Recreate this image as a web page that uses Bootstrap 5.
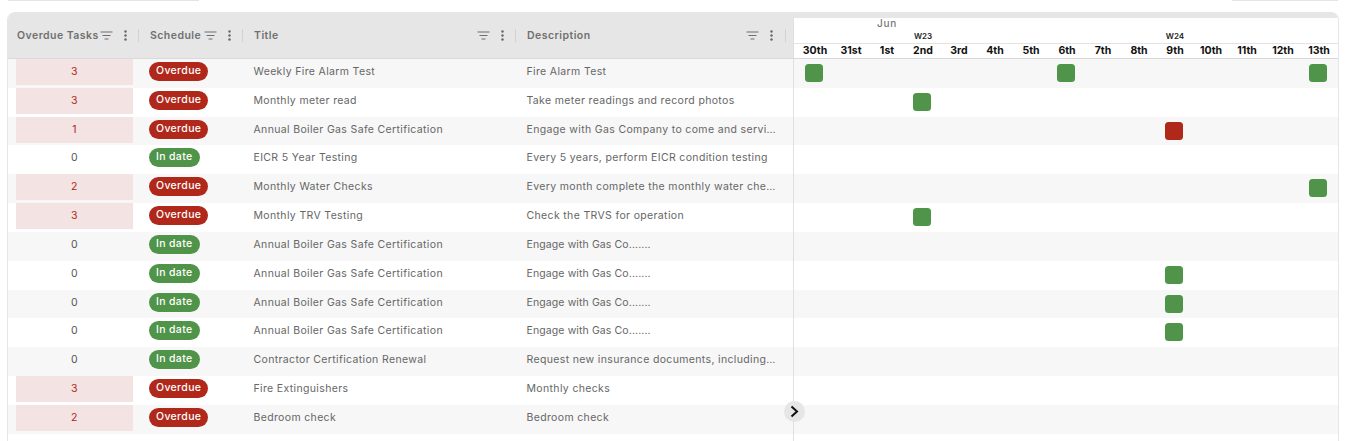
<!DOCTYPE html>
<html lang="en">
<head>
<meta charset="utf-8">
<title>Schedule</title>
<link href="https://cdn.jsdelivr.net/npm/bootstrap@5.3.0/dist/css/bootstrap.min.css" rel="stylesheet">
<style>
html,body{height:441px;overflow:hidden;background:#fff}
body{font-family:Inter,"Liberation Sans",sans-serif;font-size:10.5px;color:#666;letter-spacing:.35px}
.stubs{height:1px;padding:0 10px 0 8px}
.stubs span{display:block;height:1px;background:#e4e4e4}
.stub-a{width:191px}.stub-b{width:106px}
.sheet{margin:11px 9px 0 7px;border:1px solid #e6e6e6;border-width:0 1px;border-radius:8px 8px 0 0;height:429px;overflow:hidden;position:relative}
.head{height:47px;background:#e6e6e6;border-bottom:1px solid #d9d9d9}
.hcell{font-size:10.5px;font-weight:600;color:#707070;letter-spacing:.46px;position:relative}
.c1{width:131px;flex:none}.c2{width:104px;flex:none}.c3{width:273px;flex:none}.c4{width:277px;flex:none}
.hcell.c1{padding:1px 12px 0 9px}.hcell.c2,.hcell.c3{padding:1px 12px 0 11px}.hcell.c4{padding:1px 20px 0 11px}
.hcell::after{content:"";position:absolute;right:0;top:17px;width:1px;height:13px;background:#d2d2d2}
.hcell.c4::after{right:7px}
.tools{display:flex;align-items:center;gap:11px;margin-left:auto}
.tools svg{display:block}
.gantt-head{flex:1 0 544px;background:#fff;margin-top:6px;height:40px;border-left:1px solid #e0e0e0;color:#111;letter-spacing:0}
.month{height:11px;padding-left:83px;line-height:11px;font-size:10px;color:#777;font-weight:500;letter-spacing:.8px}
.weeks{display:grid;grid-template-columns:repeat(15,36px);padding-left:3px;height:15px;border-bottom:1px solid #e3e3e3;font-size:8px;font-weight:600;color:#222;text-align:center;line-height:14px}
.days{display:grid;grid-template-columns:repeat(15,36px);padding-left:3px;font-size:10.5px;font-weight:700;color:#111;text-align:center;line-height:14px}
.trow{height:28.84px;line-height:25px}
.trow:nth-child(odd){background:#f7f7f7}
.cnum{padding:0 0 0 8px}
.cnum div{width:117px;height:26px;text-align:center;color:#555;line-height:25px}
.cnum .late{background:#f3e3e2;color:#b0281a}
.cpill{padding:0 0 0 10px}
.pillx{display:inline-block;height:19px;line-height:18.5px;border-radius:10px;padding:0 7px;color:#fff;font-size:10.5px;font-weight:500;vertical-align:1px}
.pill-r{background:#b0281a}.pill-g{background:#4f9448}
.ctext{padding-left:10.5px;white-space:nowrap}
.dotsx{letter-spacing:.11px}
.glane{flex:1 0 544px;border-left:1px solid #e0e0e0;display:grid;grid-template-columns:repeat(15,36px);padding-left:3px}
.bar{width:18px;height:18px;border-radius:3.5px;margin:5px 0 0 8px}
.bar-g{background:#4f9448}.bar-r{background:#b0281a}
.expander{position:absolute;left:776px;top:389px;width:21px;height:21px;border-radius:50%;background:#e6e6e6}
.axis{position:absolute;left:785px;top:376px;bottom:0;width:1px;background:#e0e0e0}
.expander svg{display:block;margin:4px 0 0 5px}
</style>
</head>
<body>
<div class="stubs d-flex justify-content-between"><span class="stub-a"></span><span class="stub-b"></span></div>
<div class="sheet">
  <div class="head d-flex align-items-stretch">
    <div class="hcell c1 d-flex align-items-center"><span>Overdue Tasks</span><span class="tools"><svg width="13" height="10" viewBox="0 0 13 10"><path d="M.5 1h12M2.5 4.5h8M4.5 8h4" stroke="#6f6f6f" stroke-width="1.2"/></svg><svg width="3" height="11" viewBox="0 0 3 11"><circle cx="1.5" cy="1.5" r="1.2" fill="#666"/><circle cx="1.5" cy="5.5" r="1.2" fill="#666"/><circle cx="1.5" cy="9.5" r="1.2" fill="#666"/></svg></span></div>
    <div class="hcell c2 d-flex align-items-center"><span>Schedule</span><span class="tools"><svg width="13" height="10" viewBox="0 0 13 10"><path d="M.5 1h12M2.5 4.5h8M4.5 8h4" stroke="#6f6f6f" stroke-width="1.2"/></svg><svg width="3" height="11" viewBox="0 0 3 11"><circle cx="1.5" cy="1.5" r="1.2" fill="#666"/><circle cx="1.5" cy="5.5" r="1.2" fill="#666"/><circle cx="1.5" cy="9.5" r="1.2" fill="#666"/></svg></span></div>
    <div class="hcell c3 d-flex align-items-center"><span>Title</span><span class="tools"><svg width="13" height="10" viewBox="0 0 13 10"><path d="M.5 1h12M2.5 4.5h8M4.5 8h4" stroke="#6f6f6f" stroke-width="1.2"/></svg><svg width="3" height="11" viewBox="0 0 3 11"><circle cx="1.5" cy="1.5" r="1.2" fill="#666"/><circle cx="1.5" cy="5.5" r="1.2" fill="#666"/><circle cx="1.5" cy="9.5" r="1.2" fill="#666"/></svg></span></div>
    <div class="hcell c4 d-flex align-items-center"><span>Description</span><span class="tools"><svg width="13" height="10" viewBox="0 0 13 10"><path d="M.5 1h12M2.5 4.5h8M4.5 8h4" stroke="#6f6f6f" stroke-width="1.2"/></svg><svg width="3" height="11" viewBox="0 0 3 11"><circle cx="1.5" cy="1.5" r="1.2" fill="#666"/><circle cx="1.5" cy="5.5" r="1.2" fill="#666"/><circle cx="1.5" cy="9.5" r="1.2" fill="#666"/></svg></span></div>
    <div class="gantt-head">
      <div class="month">Jun</div>
      <div class="weeks"><span></span><span></span><span></span><span>W23</span><span></span><span></span><span></span><span></span><span></span><span></span><span>W24</span><span></span><span></span><span></span><span></span></div>
      <div class="days"><span>30th</span><span>31st</span><span>1st</span><span>2nd</span><span>3rd</span><span>4th</span><span>5th</span><span>6th</span><span>7th</span><span>8th</span><span>9th</span><span>10th</span><span>11th</span><span>12th</span><span>13th</span></div>
    </div>
  </div>
  <div class="tbody-x">
    <div class="trow d-flex"><div class="c1 cnum"><div class="late">3</div></div><div class="c2 cpill"><span class="pillx pill-r">Overdue</span></div><div class="c3 ctext">Weekly Fire Alarm Test</div><div class="c4 ctext">Fire Alarm Test</div><div class="glane"><div class="bar bar-g"></div><i></i><i></i><i></i><i></i><i></i><i></i><div class="bar bar-g"></div><i></i><i></i><i></i><i></i><i></i><i></i><div class="bar bar-g"></div></div></div>
    <div class="trow d-flex"><div class="c1 cnum"><div class="late">3</div></div><div class="c2 cpill"><span class="pillx pill-r">Overdue</span></div><div class="c3 ctext">Monthly meter read</div><div class="c4 ctext">Take meter readings and record photos</div><div class="glane"><i></i><i></i><i></i><div class="bar bar-g"></div></div></div>
    <div class="trow d-flex"><div class="c1 cnum"><div class="late">1</div></div><div class="c2 cpill"><span class="pillx pill-r">Overdue</span></div><div class="c3 ctext">Annual Boiler Gas Safe Certification</div><div class="c4 ctext">Engage with Gas Company to come and servi…</div><div class="glane"><i></i><i></i><i></i><i></i><i></i><i></i><i></i><i></i><i></i><i></i><div class="bar bar-r"></div></div></div>
    <div class="trow d-flex"><div class="c1 cnum"><div>0</div></div><div class="c2 cpill"><span class="pillx pill-g">In date</span></div><div class="c3 ctext">EICR 5 Year Testing</div><div class="c4 ctext">Every 5 years, perform EICR condition testing</div><div class="glane"></div></div>
    <div class="trow d-flex"><div class="c1 cnum"><div class="late">2</div></div><div class="c2 cpill"><span class="pillx pill-r">Overdue</span></div><div class="c3 ctext">Monthly Water Checks</div><div class="c4 ctext">Every month complete the monthly water che…</div><div class="glane"><i></i><i></i><i></i><i></i><i></i><i></i><i></i><i></i><i></i><i></i><i></i><i></i><i></i><i></i><div class="bar bar-g"></div></div></div>
    <div class="trow d-flex"><div class="c1 cnum"><div class="late">3</div></div><div class="c2 cpill"><span class="pillx pill-r">Overdue</span></div><div class="c3 ctext">Monthly TRV Testing</div><div class="c4 ctext">Check the TRVS for operation</div><div class="glane"><i></i><i></i><i></i><div class="bar bar-g"></div></div></div>
    <div class="trow d-flex"><div class="c1 cnum"><div>0</div></div><div class="c2 cpill"><span class="pillx pill-g">In date</span></div><div class="c3 ctext">Annual Boiler Gas Safe Certification</div><div class="c4 ctext dotsx">Engage with Gas Co.......</div><div class="glane"></div></div>
    <div class="trow d-flex"><div class="c1 cnum"><div>0</div></div><div class="c2 cpill"><span class="pillx pill-g">In date</span></div><div class="c3 ctext">Annual Boiler Gas Safe Certification</div><div class="c4 ctext dotsx">Engage with Gas Co.......</div><div class="glane"><i></i><i></i><i></i><i></i><i></i><i></i><i></i><i></i><i></i><i></i><div class="bar bar-g"></div></div></div>
    <div class="trow d-flex"><div class="c1 cnum"><div>0</div></div><div class="c2 cpill"><span class="pillx pill-g">In date</span></div><div class="c3 ctext">Annual Boiler Gas Safe Certification</div><div class="c4 ctext dotsx">Engage with Gas Co.......</div><div class="glane"><i></i><i></i><i></i><i></i><i></i><i></i><i></i><i></i><i></i><i></i><div class="bar bar-g"></div></div></div>
    <div class="trow d-flex"><div class="c1 cnum"><div>0</div></div><div class="c2 cpill"><span class="pillx pill-g">In date</span></div><div class="c3 ctext">Annual Boiler Gas Safe Certification</div><div class="c4 ctext dotsx">Engage with Gas Co.......</div><div class="glane"><i></i><i></i><i></i><i></i><i></i><i></i><i></i><i></i><i></i><i></i><div class="bar bar-g"></div></div></div>
    <div class="trow d-flex"><div class="c1 cnum"><div>0</div></div><div class="c2 cpill"><span class="pillx pill-g">In date</span></div><div class="c3 ctext">Contractor Certification Renewal</div><div class="c4 ctext">Request new insurance documents, including…</div><div class="glane"></div></div>
    <div class="trow d-flex"><div class="c1 cnum"><div class="late">3</div></div><div class="c2 cpill"><span class="pillx pill-r">Overdue</span></div><div class="c3 ctext">Fire Extinguishers</div><div class="c4 ctext">Monthly checks</div><div class="glane"></div></div>
    <div class="trow d-flex"><div class="c1 cnum"><div class="late">2</div></div><div class="c2 cpill"><span class="pillx pill-r">Overdue</span></div><div class="c3 ctext">Bedroom check</div><div class="c4 ctext">Bedroom check</div><div class="glane"></div></div>
  </div>
  <div class="axis"></div>
  <div class="expander"><svg width="11" height="13" viewBox="0 0 11 13"><path d="M2.5 1.5L8 6.5l-5.5 5" fill="none" stroke="#111" stroke-width="2"/></svg></div>
</div>
<script src="https://cdn.jsdelivr.net/npm/bootstrap@5.3.0/dist/js/bootstrap.bundle.min.js"></script>
</body>
</html>
